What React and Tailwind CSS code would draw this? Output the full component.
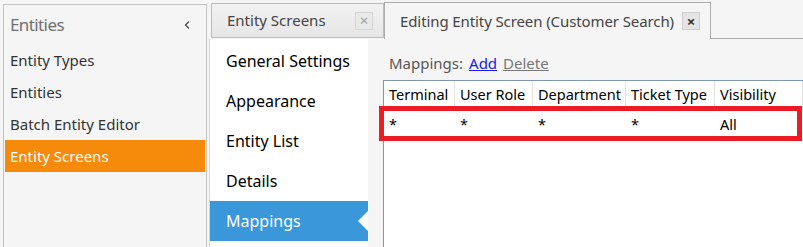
import { ChevronLeft } from 'lucide-react'

const font = "font-['Noto_Sans','Open_Sans',sans-serif]"

const sideItems = ['Entity Types', 'Entities', 'Batch Entity Editor', 'Entity Screens']
const navItems = ['General Settings', 'Appearance', 'Entity List', 'Details', 'Mappings']
const columns = [
  { name: 'Terminal', w: 'w-[71px]', value: '*' },
  { name: 'User Role', w: 'w-[78px]', value: '*' },
  { name: 'Department', w: 'w-[93px]', value: '*' },
  { name: 'Ticket Type', w: 'w-[89px]', value: '*' },
  { name: 'Visibility', w: 'flex-1', value: 'All' },
]

function CloseBox({ dark }) {
  return (
    <span
      className={
        'flex items-center justify-center w-[18px] h-[18px] border text-[15px] leading-none ' +
        (dark
          ? 'bg-[#e4e4e4] border-[#cfcfcf] text-[#333] font-bold'
          : 'bg-[#e9e9e9] border-[#d4d4d4] text-[#a0a0a0]')
      }
    >
      ×
    </span>
  )
}

export default function App() {
  return (
    <div className={`${font} w-[803px] h-[247px] overflow-hidden bg-[#f5f5f5] flex pl-[3px]`}>
      {/* Left side menu */}
      <div className="w-[204px] mt-1 border border-b-0 border-[#c4c4c4] bg-[#f5f5f5] flex flex-col px-px">
        <div className="h-[39px] flex items-center justify-between pl-[5px] pr-[12px]">
          <span className="text-[17px] tracking-[-0.6px] text-[#707070]">Entities</span>
          <ChevronLeft size={12} strokeWidth={3} className="text-[#555]" />
        </div>
        {sideItems.map(item => (
          <div
            key={item}
            className={
              'h-[32px] flex items-center pl-[5px] text-[15px] ' +
              (item === 'Entity Screens' ? 'bg-[#f68b0b] text-white' : 'text-[#333]')
            }
          >
            {item}
          </div>
        ))}
      </div>

      {/* Documents */}
      <div className="flex-1 flex flex-col">
        {/* Tab strip */}
        <div className="h-[39px] flex items-end">
          <div className="ml-[4px] w-[173px] h-[35px] mb-px border border-[#bcbcbc] bg-gradient-to-b from-[#f2f2f2] to-[#e6e6e6] flex items-center justify-between pl-[15px] pr-[10px]">
            <span className="text-[15px] text-[#444] whitespace-nowrap">Entity Screens</span>
            <CloseBox />
          </div>
          <div className="w-[327px] h-[37px] border border-b-0 border-[#adadad] bg-[#f5f5f5] flex items-center justify-between pl-[15px] pr-[10px]">
            <span className="text-[15px] tracking-[-0.1px] text-[#444] whitespace-nowrap">
              Editing Entity Screen (Customer Search)
            </span>
            <CloseBox dark />
          </div>
          <div className="flex-1 h-px bg-[#adadad]" />
        </div>

        <div className="flex-1 flex">
          {/* Entity screen nav */}
          <div className="w-[159px] ml-[2px] border-l border-[#d6d6d6] bg-white flex flex-col pt-[2px]">
            {navItems.map(item => (
              <div
                key={item}
                className={
                  'relative h-[40px] flex items-center pl-[16px] text-[16px] ' +
                  (item === 'Mappings' ? 'bg-[#3a98da] text-white' : 'text-black')
                }
              >
                {item}
                {item === 'Mappings' && (
                  <span className="absolute right-0 top-[10px] w-0 h-0 border-y-[10px] border-y-transparent border-r-[10px] border-r-white" />
                )}
              </div>
            ))}
          </div>

          {/* Mappings editor */}
          <div className="flex-1 flex flex-col pl-[15px] pt-[12px]">
            <div className="flex items-center gap-[6px] text-[15px] h-[24px] pl-[6px]">
              <span className="text-[#555]">Mappings:</span>
              <span className="text-[#1a1aee] underline">Add</span>
              <span className="text-[#777] underline">Delete</span>
            </div>
            <div className="relative mt-[5px] flex-1 border-l border-t border-[#7f96b5] bg-white">
              <div className="flex h-[29px] border-b border-[#e6e6e6]">
                {columns.map(c => (
                  <div
                    key={c.name}
                    className={`${c.w} border-r border-[#e2e2e2] flex items-center pl-[5px] text-[14.5px] text-black whitespace-nowrap overflow-hidden`}
                  >
                    {c.name}
                  </div>
                ))}
              </div>
              <div className="flex h-[30px]">
                {columns.map(c => (
                  <div key={c.name} className={`${c.w} flex items-center pl-[5px] text-[14.5px] text-black`}>
                    {c.value}
                  </div>
                ))}
              </div>
              {/* red highlight */}
              <div className="absolute left-[-5px] top-[25px] w-[423px] h-[35px] border-[5px] border-[#ed1c24]" />
            </div>
          </div>
        </div>
      </div>
    </div>
  )
}
